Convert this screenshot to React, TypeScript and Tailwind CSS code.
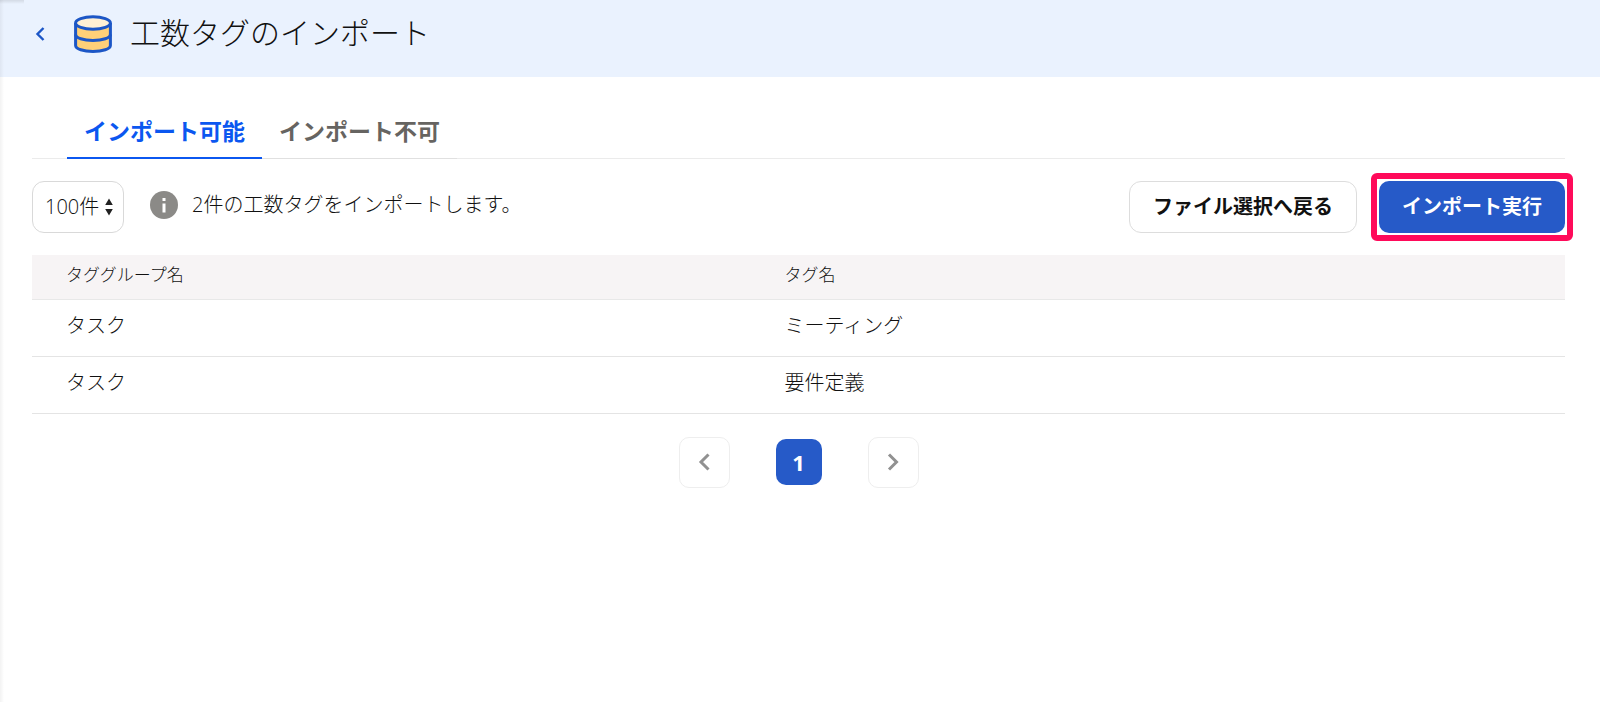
import type { ReactNode } from "react";

const rows = [
  { id: 1, group: "タスク", tag: "ミーティング" },
  { id: 2, group: "タスク", tag: "要件定義" },
];

function DatabaseIcon() {
  return (
    <svg width="38" height="38" viewBox="0 0 38 38" fill="none" stroke="#1c56c6" strokeWidth="3" aria-hidden="true">
      <path d="M1.6 8v22.5c0 3.4 7.8 6 17.4 6s17.4-2.6 17.4-6V8" fill="#ffd078" />
      <ellipse cx="19" cy="8" rx="17.4" ry="6.2" fill="#fff0d4" />
      <path d="M1.6 19.5c0 3.4 7.8 6 17.4 6s17.4-2.6 17.4-6" />
    </svg>
  );
}

function InfoIcon() {
  return (
    <svg width="28" height="28" viewBox="0 0 28 28" aria-hidden="true">
      <circle cx="14" cy="14" r="14" fill="#8b8a87" />
      <path d="M12.5 7h3v3h-3zM12.5 12.5h3v9h-3z" fill="#fff" />
    </svg>
  );
}

function Chevron({ left }: { left?: boolean }) {
  return (
    <svg width="12" height="18" viewBox="0 0 12 18" fill="none" stroke="#919191" strokeWidth="3" aria-hidden="true">
      <path d={left ? "M10.5 1.5 3 9l7.5 7.5" : "M2 1.5 9.5 9 2 16.5"} />
    </svg>
  );
}

function PageButton({ label, children }: { label: string; children: ReactNode }) {
  return (
    <button
      type="button"
      aria-label={label}
      className="flex size-[51px] items-center justify-center rounded-[10px] border border-[#eeeeee] bg-white"
    >
      {children}
    </button>
  );
}

export default function App() {
  return (
    <div className="relative min-h-screen bg-white font-['Open_Sans','Noto_Sans_CJK_JP',sans-serif] text-xl font-light text-[#111111]">
      <div className="pointer-events-none absolute inset-y-0 left-0 w-1 bg-linear-to-r from-black/5 to-transparent" />
      <div className="pointer-events-none absolute top-0 left-0 h-1 w-6 bg-linear-to-b from-black/10 to-transparent" />
      <header className="flex h-[77px] items-start bg-[#eaf2fe] pt-[15px] pl-[34px]">
        <a href="#back" aria-label="戻る" className="flex h-[38px] w-3 items-center justify-center">
          <svg width="10" height="14" viewBox="0 0 10 14" fill="none" stroke="#1c56c6" strokeWidth="2.4" aria-hidden="true">
            <path d="M8.5 1 2.5 7l6 6" />
          </svg>
        </a>
        <div className="ml-7">
          <DatabaseIcon />
        </div>
        <h1 className="ml-[18px] text-3xl leading-9">工数タグのインポート</h1>
      </header>

      <main className="pt-7 pr-[35px] pl-8">
        <div role="tablist" className="flex h-[54px] border-b border-[#ebebeb] pl-[35px] text-[23px] font-bold">
          <button role="tab" aria-selected="true" type="button" className="h-[54px] border-b-2 border-[#0b57f0] px-[17px] text-[#0b57f0]">
            インポート可能
          </button>
          <button role="tab" aria-selected="false" type="button" className="h-[54px] border-b border-[#e0e0e0] px-[17px] text-[#666461]">
            インポート不可
          </button>
        </div>

        <div className="flex items-center pt-[22px]">
          <div className="relative">
            <select
              aria-label="表示件数"
              className="h-[52px] w-[92px] appearance-none rounded-xl border border-[#d9d9d9] bg-white pl-3"
            >
              <option>100件</option>
            </select>
            <svg
              className="pointer-events-none absolute top-[17px] right-[11px]"
              width="8"
              height="18"
              viewBox="0 0 8 18"
              fill="#222222"
              aria-hidden="true"
            >
              <path d="M4 0.5 7.8 7H0.2zM4 17.5 7.8 11H0.2z" />
            </svg>
          </div>
          <div className="mb-1 ml-[26px] flex items-center gap-[14px]">
            <InfoIcon />
            <p>2件の工数タグをインポートします。</p>
          </div>
          <div className="ml-auto flex items-center gap-[22px] font-bold">
            <button type="button" className="h-[52px] rounded-xl border border-[#dddddd] bg-white px-[23px]">
              ファイル選択へ戻る
            </button>
            <div className="-m-2 rounded-md border-6 border-[#ff0a5a] p-0.5">
              <button type="button" className="h-[52px] rounded-[10px] bg-[#265ac8] px-[23px] text-white">
                インポート実行
              </button>
            </div>
          </div>
        </div>

        <table className="mt-[22px] w-full table-fixed border-collapse text-left">
          <thead className="bg-[#f7f4f5] text-[17px]">
            <tr className="h-11 border-b border-[#e8e8e8]">
              <th scope="col" className="w-[47%] pb-1 pl-[34px] font-light">タググループ名</th>
              <th scope="col" className="pb-1 pl-8 font-light">タグ名</th>
            </tr>
          </thead>
          <tbody>
            {rows.map((row) => (
              <tr key={row.id} className="h-[57px] border-b border-[#e4e4e4]">
                <td className="pb-1 pl-[34px]">{row.group}</td>
                <td className="pb-1 pl-8">{row.tag}</td>
              </tr>
            ))}
          </tbody>
        </table>

        <nav aria-label="ページ" className="mt-[23px] flex items-center justify-center gap-[46px]">
          <PageButton label="前のページ">
            <Chevron left />
          </PageButton>
          <button
            type="button"
            aria-current="page"
            className="size-[46px] rounded-[10px] bg-[#265ac8] text-[22px] font-bold text-white"
          >
            1
          </button>
          <PageButton label="次のページ">
            <Chevron />
          </PageButton>
        </nav>
      </main>
    </div>
  );
}
